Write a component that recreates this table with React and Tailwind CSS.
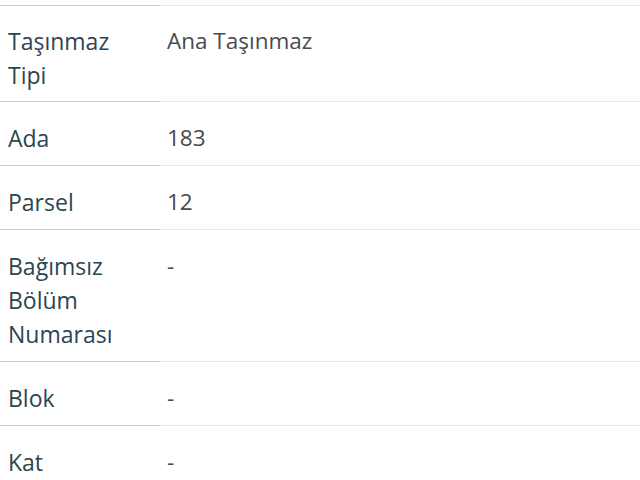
const rows = [
  { label: ["Taşınmaz", "Tipi"], value: "Ana Taşınmaz" },
  { label: ["Ada"], value: "183" },
  { label: ["Parsel"], value: "12" },
  { label: ["Bağımsız", "Bölüm", "Numarası"], value: "-" },
  { label: ["Blok"], value: "-" },
  { label: ["Kat"], value: "-" },
];

export default function App() {
  return (
    <div
      className="w-[640px] h-[480px] overflow-hidden bg-white pt-[5px]"
      style={{ fontFamily: '"Open Sans", "Noto Sans", sans-serif' }}
    >
      <table className="w-full border-collapse leading-[34px]">
        <tbody>
          {rows.map((row, i) => (
            <tr key={i}>
              <td
                className={`w-[160px] align-top border-t border-[#c9cccd] pl-[8px] text-[23px] font-medium text-[#2b4651] ${
                  i === 0 ? "pt-[18px] pb-[9px]" : "pt-[19px] pb-[10px]"
                }`}
              >
                {row.label.map((l) => (
                  <div key={l}>{l}</div>
                ))}
              </td>
              <td
                className={`align-top border-t border-[#e6e7e7] pl-[7px] text-[22.5px] text-[#474b4d] ${
                  i === 0 ? "pt-[18px]" : "pt-[19px]"
                }`}
              >
                {row.value}
              </td>
            </tr>
          ))}
        </tbody>
      </table>
    </div>
  );
}
